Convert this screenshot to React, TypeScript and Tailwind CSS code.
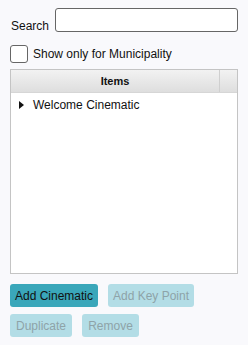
import React from 'react';

const App: React.FC = () => {
  return (
    <div className="w-[248px] h-[345px] bg-[#f9f9fc] font-['Liberation_Sans',Arial,sans-serif] text-[12px] leading-[14px] text-[#111] pt-[8px] px-[10px]">
      <div className="flex items-end h-[24px]">
        <span className="w-[45px] pl-[1px] translate-y-[1px]">Search</span>
        <input className="w-[183px] h-[24px] border border-[#666] rounded-[3px] bg-white outline-none" />
      </div>

      <label className="flex items-center mt-[13px] h-[18px]">
        <span className="w-[18px] h-[18px] border border-[#666] rounded-[3px] bg-white" />
        <span className="ml-[5px]">Show only for Municipality</span>
      </label>

      <div className="mt-[6px] w-[228px] h-[205px] border border-[#c4c4c4] bg-white flex flex-col">
        <div className="flex h-[23px] border-b border-[#d6d6d6] bg-gradient-to-b from-[#f2f2f2] to-[#dedede]">
          <div className="flex-1 flex items-center justify-center font-bold text-[11px] border-r border-[#cfcfcf]">Items</div>
          <div className="w-[17px]" />
        </div>
        <div className="flex items-center h-[24px] pl-[8px]">
          <svg width="5" height="8" viewBox="0 0 5 8" className="mr-[9px]">
            <path d="M0 0 L5 4 L0 8 Z" fill="#111" />
          </svg>
          <span>Welcome Cinematic</span>
        </div>
      </div>

      <div className="flex gap-[10px] mt-[10px]">
        <button className="h-[23px] w-[88px] rounded-[3px] bg-[#3aa7ba] text-[#111]">Add Cinematic</button>
        <button className="h-[23px] w-[86px] rounded-[3px] bg-[#b3dde6] text-[#8ea3a8]">Add Key Point</button>
      </div>
      <div className="flex gap-[10px] mt-[7px]">
        <button className="h-[23px] w-[62px] rounded-[3px] bg-[#b3dde6] text-[#8ea3a8]">Duplicate</button>
        <button className="h-[23px] w-[57px] rounded-[3px] bg-[#b3dde6] text-[#8ea3a8]">Remove</button>
      </div>
    </div>
  );
};

export default App;
